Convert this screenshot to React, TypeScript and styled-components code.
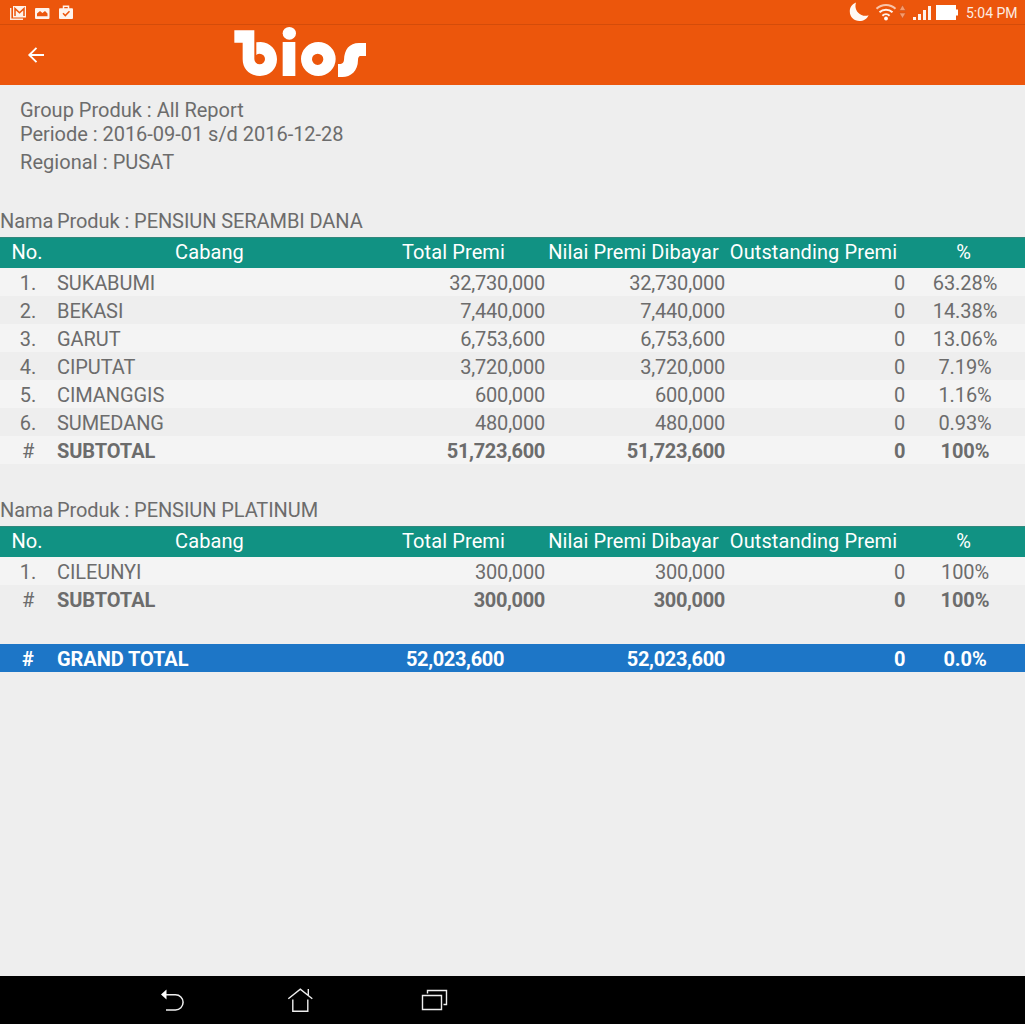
import React from "react";
import styled, { createGlobalStyle } from "styled-components";

const Global = createGlobalStyle`
  * { box-sizing: border-box; }
  body { margin: 0; background: #eeeeee; font-family: Roboto, sans-serif; }
`;

const Screen = styled.div`
  display: flex;
  flex-direction: column;
  width: 1025px;
  height: 1024px;
  overflow: hidden;
  background: #eeeeee;
  color: #6c6c6c;
  font-size: 20px;
`;

const StatusBar = styled.div`
  display: flex;
  justify-content: space-between;
  flex: none;
  height: 25px;
  background: #ec560c;
  border-bottom: 1px solid #d44c0a;
`;

const StatusGroup = styled.div`
  display: flex;
  align-items: center;
  height: 24px;
`;

const Clock = styled.span`
  width: 59px;
  padding-top: 2px;
  font-size: 14px;
  line-height: 22px;
  color: #fdece2;
  white-space: nowrap;
`;

const AppBar = styled.header`
  display: flex;
  flex: none;
  height: 60px;
  background: #ec560c;
`;

const BackButton = styled.button`
  width: 72px;
  height: 60px;
  margin-right: 153px;
  padding: 0;
  border: 0;
  background: none;
`;

const Report = styled.main`
  flex: 1;
`;

const Filters = styled.section`
  padding: 13px 20px 0;
  height: 122px;
`;

const FilterLine = styled.div<{ $tall?: boolean; $spacing?: number }>`
  line-height: ${(p) => (p.$tall ? 32 : 24)}px;
  letter-spacing: ${(p) => p.$spacing ?? 0}px;
  white-space: pre;
`;

const Product = styled.section<{ $gap: number }>`
  margin-bottom: ${(p) => p.$gap}px;
`;

const ProductName = styled.div`
  display: grid;
  grid-template-columns: 57px 1fr;
  height: 30px;
  line-height: 28px;
  letter-spacing: -0.08px;
  white-space: nowrap;
`;

const Row = styled.div<{ $shade?: boolean; $bold?: boolean; $grand?: boolean }>`
  display: grid;
  grid-template-columns: 57px 308px 180px 180px 180px 120px;
  height: 28px;
  line-height: 30px;
  background: ${(p) => (p.$grand ? "#1d76c7" : p.$shade ? "#f4f4f4" : "#eeeeee")};
  color: ${(p) => (p.$grand ? "#ffffff" : "inherit")};
  font-weight: ${(p) => (p.$bold ? 700 : 400)};
  letter-spacing: -0.08px;
`;

const HeadRow = styled(Row)`
  height: 31px;
  line-height: 28px;
  border-top: 1px solid #32877c;
  background: #119283;
  color: #ffffff;
  letter-spacing: 0.1px;
`;

const Cell = styled.div<{ $align?: "left" | "center" | "right"; $regular?: boolean }>`
  text-align: ${(p) => p.$align ?? "right"};
  font-weight: ${(p) => (p.$regular ? 400 : "inherit")};
  white-space: nowrap;
`;

const NumberCell = styled(Cell)`
  padding-right: 1px;
`;

const Amount = styled(Cell)<{ $strong?: boolean }>`
  letter-spacing: ${(p) => (p.$strong ? -0.35 : -0.2)}px;
`;

const HeadCell = styled(Cell)`
  text-align: center;
  padding-right: 3px;
`;

const NavBar = styled.nav`
  display: flex;
  align-items: center;
  flex: none;
  gap: 91px;
  height: 48px;
  padding-left: 152px;
  background: #000000;
`;

const NavButton = styled.button`
  display: block;
  width: 40px;
  height: 48px;
  padding: 0;
  border: 0;
  background: none;
`;

const headings = ["No.", "Cabang", "Total Premi", "Nilai Premi Dibayar", "Outstanding Premi", "%"];

type Branch = { name: string; total: string; share: string };

const products: { name: string; branches: Branch[]; subtotal: string; gap: number }[] = [
  {
    name: "PENSIUN SERAMBI DANA",
    branches: [
      { name: "SUKABUMI", total: "32,730,000", share: "63.28%" },
      { name: "BEKASI", total: "7,440,000", share: "14.38%" },
      { name: "GARUT", total: "6,753,600", share: "13.06%" },
      { name: "CIPUTAT", total: "3,720,000", share: "7.19%" },
      { name: "CIMANGGIS", total: "600,000", share: "1.16%" },
      { name: "SUMEDANG", total: "480,000", share: "0.93%" },
    ],
    subtotal: "51,723,600",
    gap: 32,
  },
  {
    name: "PENSIUN PLATINUM",
    branches: [{ name: "CILEUNYI", total: "300,000", share: "100%" }],
    subtotal: "300,000",
    gap: 31,
  },
];

const NotificationIcons = () => (
  <svg width="100" height="24" viewBox="0 0 100 24">
    <path d="M10.7 8v11.2H23" fill="none" stroke="#fde9de" strokeWidth="1.4" />
    <path d="M13 6h13v11.5H13z" fill="#fff3ec" />
    <path d="M15 16V8.6l4.5 4.2L24 8.6V16" fill="none" stroke="#ec560c" strokeWidth="1.5" />
    <rect x="35" y="8" width="14.5" height="11" rx="1" fill="#fff3ec" />
    <path d="M37 16.2v-2.6l3-2.6 2.4 2 2.6-2 2.5 2.4v2.8z" fill="#ec560c" />
    <path d="M63.500 9V6.300h5V9" fill="none" stroke="#fff3ec" strokeWidth="1.500" />
    <rect x="59" y="8.300" width="14" height="10.700" rx="1" fill="#fff3ec" />
    <path d="M63 13.300l2.300 2.300 4.200-4.300" fill="none" stroke="#ec560c" strokeWidth="1.500" />
  </svg>
);

const SystemIcons = () => (
  <svg width="126" height="24" viewBox="840 0 126 24">
    <path d="M856 2.500C852 4 849.800 7.500 849.800 11.500C849.800 17 854 21 859.500 21C863.500 21 867 18.800 868.600 15.200C866.500 16 864 16.200 861.500 15C856.500 12.800 854.300 7.500 856 2.500z" fill="#fff8f4" />
    <g fill="none" stroke="#fff3ec" strokeWidth="2">
      <path d="M876.500 8.800a13.500 13.500 0 0 1 19 0" strokeOpacity=".7" />
      <path d="M879.500 12.300a9.300 9.300 0 0 1 13 0" />
      <path d="M882.400 15.700a5.200 5.200 0 0 1 7.200 0" />
    </g>
    <circle cx="886" cy="18.500" r="1.900" fill="#fff" />
    <path d="M899.300 10.500l3.200-5.500 3.200 5.500zM899.300 13l3.200 5.500 3.200-5.500z" fill="#f79b6c" stroke="#c9531d" strokeWidth=".6" />
    <path d="M913 17h3v3h-3zM918 14h3v6h-3zM923 10h3v10h-3zM928 6h3v14h-3z" fill="#fff3ec" />
    <path d="M936 5h20v4.500h2v6h-2V20h-20z" fill="#fff" />
  </svg>
);

const BackArrow = () => (
  <svg width="72" height="60" viewBox="0 25 72 60">
    <path d="M44 55H29.500M36.500 47.800L29.300 55l7.200 7.200" fill="none" stroke="#fff" strokeWidth="1.900" />
  </svg>
);

const Logo = () => (
  <svg width="150" height="60" viewBox="0 15 450 180" fill="#fff" role="img" aria-label="bios">
    <path d="M28 31H88V117A16 16 0 1 0 104 101Q98 101 94 105V67Q101 66 107 66C136 67 156 90 156 118C156 147 134 168 105 168C75 168 53 148 53 118V68H28Z" />
    <ellipse cx="193" cy="40" rx="20" ry="19" />
    <path d="M173 66H211V168H173Z" />
    <path fillRule="evenodd" d="M280 66A52 51 0 1 1 280 168A52 51 0 1 1 280 66ZM278 101A17 17 0 1 0 278 135A17 17 0 1 0 278 101Z" />
    <path d="M423 69V108H406Q399 109 399 120C399 153 377 171 352 171H339V132H347Q356 131 357 120C358 89 373 69 402 69Z" />
  </svg>
);

const BackIcon = () => (
  <svg width="40" height="48" viewBox="152 976 40 48">
    <path d="M161 994.500l5.500-5v10z" fill="#fff" />
    <path d="M166 994.700h9.500a7.600 7.600 0 0 1 0 15.200H166" fill="none" stroke="#eee" strokeWidth="1.500" />
  </svg>
);

const HomeIcon = () => (
  <svg width="40" height="48" viewBox="283 976 40 48">
    <path d="M288.300 998.700l12-9.600 12 9.600M308.300 995v-6M292.800 999.500v11.700h15v-11.700" fill="none" stroke="#eee" strokeWidth="1.400" />
  </svg>
);

const RecentIcon = () => (
  <svg width="40" height="48" viewBox="414 976 40 48">
    <path d="M422.500 995.500h19v14h-19zM427.500 993.500v-3h19v14h-3" fill="none" stroke="#eee" strokeWidth="1.400" />
  </svg>
);

export default function App() {
  return (
    <Screen>
      <Global />
      <StatusBar>
        <StatusGroup>
          <NotificationIcons />
        </StatusGroup>
        <StatusGroup>
          <SystemIcons />
          <Clock>5:04 PM</Clock>
        </StatusGroup>
      </StatusBar>
      <AppBar>
        <BackButton aria-label="Back">
          <BackArrow />
        </BackButton>
        <Logo />
      </AppBar>
      <Report>
        <Filters>
          <FilterLine>Group Produk : All Report</FilterLine>
          <FilterLine $spacing={-0.03}>Periode : 2016-09-01 s/d 2016-12-28</FilterLine>
          <FilterLine $tall $spacing={0.06}>Regional : PUSAT</FilterLine>
        </Filters>
        {products.map((product) => (
          <Product key={product.name} $gap={product.gap}>
            <ProductName>
              <span>Nama</span>
              <span>Produk : {product.name}</span>
            </ProductName>
            <HeadRow>
              {headings.map((heading) => (
                <HeadCell key={heading}>{heading}</HeadCell>
              ))}
            </HeadRow>
            {product.branches.map((branch, i) => (
              <Row key={branch.name} $shade={i % 2 === 0}>
                <NumberCell $align="center">{i + 1}.</NumberCell>
                <Cell $align="left">{branch.name}</Cell>
                <Amount>{branch.total}</Amount>
                <Amount>{branch.total}</Amount>
                <Amount>0</Amount>
                <Cell $align="center">{branch.share}</Cell>
              </Row>
            ))}
            <Row $bold $shade={product.branches.length % 2 === 0}>
              <NumberCell $align="center" $regular>#</NumberCell>
              <Cell $align="left">SUBTOTAL</Cell>
              <Amount $strong>{product.subtotal}</Amount>
              <Amount $strong>{product.subtotal}</Amount>
              <Amount $strong>0</Amount>
              <Cell $align="center">100%</Cell>
            </Row>
          </Product>
        ))}
        <Row $bold $grand>
          <NumberCell $align="center">#</NumberCell>
          <Cell $align="left">GRAND TOTAL</Cell>
          <Amount $strong $align="center">52,023,600</Amount>
          <Amount $strong>52,023,600</Amount>
          <Amount $strong>0</Amount>
          <Cell $align="center">0.0%</Cell>
        </Row>
      </Report>
      <NavBar>
        <NavButton aria-label="Back">
          <BackIcon />
        </NavButton>
        <NavButton aria-label="Home">
          <HomeIcon />
        </NavButton>
        <NavButton aria-label="Recent apps">
          <RecentIcon />
        </NavButton>
      </NavBar>
    </Screen>
  );
}
